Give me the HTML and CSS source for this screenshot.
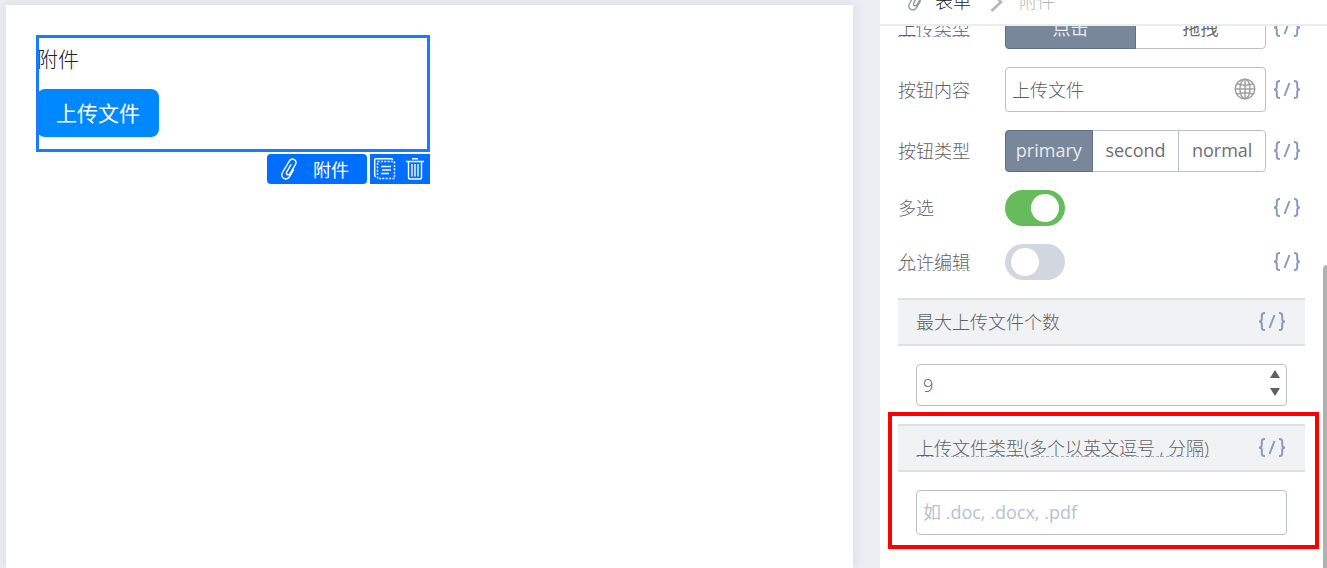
FILE: index.html
```html
<!DOCTYPE html>
<html lang="zh-CN">
<head>
    <meta charset="UTF-8">
    <meta name="viewport" content="width=device-width, initial-scale=1.0">
    <title>表单设计器</title>
    <link rel="stylesheet" href="styles.css">
</head>
<body>
    <!-- shared icons -->
    <svg class="sprite" aria-hidden="true">
        <symbol id="icon-clip" viewBox="0 0 18 22">
            <path d="M10.800 6.800 L6.800 13.800 C5.500 16.300 8.600 18 10 15.600 L15.400 6.600 C18 2 12 -1 9.300 3.200 L2.500 14.500 C-0.500 20 6.500 23.500 9.700 18.300 L13.500 12" fill="none" stroke="currentColor" stroke-width="1.400" stroke-linecap="round"/>
        </symbol>
        <symbol id="icon-code" viewBox="0 0 28 22">
            <path d="M7 2 H6.500 Q3.800 2 3.800 4.500 V8 Q3.800 10.500 1 10.500 Q3.800 10.500 3.800 13 V16.500 Q3.800 19 6.500 19 H7 M21 2 H21.500 Q24.200 2 24.200 4.500 V8 Q24.200 10.500 27 10.500 Q24.200 10.500 24.200 13 V16.500 Q24.200 19 21.500 19 H21 M16.500 4 L11.500 17" fill="none" stroke="currentColor" stroke-width="2"/>
        </symbol>
    </svg>

    <main class="workspace">
        <div class="canvas">
            <div class="widget">
                <div class="widget-title">附件</div>
                <button type="button" class="upload-btn">上传文件</button>
                <div class="widget-bar">
                    <div class="widget-tag">
                        <svg class="icon-clip"><use href="#icon-clip"/></svg>
                        <span>附件</span>
                    </div>
                    <div class="widget-tools">
                        <button type="button" aria-label="复制">
                            <svg width="22" height="22" viewBox="0 0 22 22" fill="none" stroke="currentColor">
                                <path d="M2 18.500 H1.500 Q0.700 18.500 0.700 17.500 V1.500 Q0.700 0.700 1.500 0.700 H17.500 Q18.500 0.700 18.500 1.500 V2" stroke-width="1.400"/>
                                <rect x="3.500" y="3.500" width="17" height="17" stroke-width="1.400" stroke-dasharray="2 1.400"/>
                                <path d="M7 8.500 H17 M8 12 H17 M7 15.500 H15" stroke-width="1.400"/>
                            </svg>
                        </button>
                        <button type="button" aria-label="删除">
                            <svg width="20" height="22" viewBox="0 0 20 22" fill="none" stroke="currentColor">
                                <path d="M1 3.500 H19 M7 0.700 H13" stroke-width="1.400"/>
                                <path d="M3.500 4 V19.500 Q3.500 21 5 21 H15 Q16.500 21 16.500 19.500 V4" stroke-width="1.400"/>
                                <path d="M7 6 V18.500 M10 6 V18.500 M13 6 V18.500" stroke-width="1.400"/>
                            </svg>
                        </button>
                    </div>
                </div>
            </div>
        </div>
    </main>

    <aside class="panel">
        <header class="panel-header">
            <svg class="icon-clip"><use href="#icon-clip"/></svg>
            <span class="crumb">表单</span>
            <svg class="chevron" width="13" height="20" viewBox="0 0 13 20"><path d="M1.500 1 L11 10 L1.500 19" fill="none" stroke="currentColor" stroke-width="2.500"/></svg>
            <span class="crumb current">附件</span>
        </header>

        <form class="settings">
            <div class="row">
                <span class="label tip">上传类型</span>
                <div class="segment">
                    <button type="button" class="active">点击</button>
                    <button type="button">拖拽</button>
                </div>
                <button type="button" class="code-btn" aria-label="代码"><svg><use href="#icon-code"/></svg></button>
            </div>

            <div class="row">
                <label class="label" for="btn-text">按钮内容</label>
                <div class="field">
                    <input type="text" id="btn-text" value="上传文件">
                    <svg class="globe" width="22" height="22" viewBox="0 0 22 22" fill="none" stroke="currentColor" stroke-width="1.500">
                        <circle cx="11" cy="11" r="9.800"/>
                        <ellipse cx="11" cy="11" rx="5" ry="9.800"/>
                        <path d="M11 1 V21 M1 11 H21 M3 5.800 Q11 8.500 19 5.800 M3 16.200 Q11 13.500 19 16.200"/>
                    </svg>
                </div>
                <button type="button" class="code-btn" aria-label="代码"><svg><use href="#icon-code"/></svg></button>
            </div>

            <div class="row">
                <span class="label">按钮类型</span>
                <div class="segment">
                    <button type="button" class="active">primary</button>
                    <button type="button">second</button>
                    <button type="button">normal</button>
                </div>
                <button type="button" class="code-btn" aria-label="代码"><svg><use href="#icon-code"/></svg></button>
            </div>

            <div class="row">
                <label class="label" for="multiple">多选</label>
                <input type="checkbox" class="switch" id="multiple" checked>
                <button type="button" class="code-btn" aria-label="代码"><svg><use href="#icon-code"/></svg></button>
            </div>

            <div class="row">
                <label class="label tip" for="editable">允许编辑</label>
                <input type="checkbox" class="switch" id="editable">
                <button type="button" class="code-btn" aria-label="代码"><svg><use href="#icon-code"/></svg></button>
            </div>

            <section class="group">
                <div class="group-title">
                    <label class="label" for="max-count">最大上传文件个数</label>
                    <button type="button" class="code-btn" aria-label="代码"><svg><use href="#icon-code"/></svg></button>
                </div>
                <div class="field number">
                    <input type="number" id="max-count" value="9">
                    <div class="stepper">
                        <button type="button" class="up" aria-label="增加"></button>
                        <button type="button" class="down" aria-label="减少"></button>
                    </div>
                </div>
            </section>

            <section class="group highlight">
                <div class="group-title">
                    <label class="label tip" for="file-types">上传文件类型(多个以英文逗号 , 分隔)</label>
                    <button type="button" class="code-btn" aria-label="代码"><svg><use href="#icon-code"/></svg></button>
                </div>
                <div class="field">
                    <input type="text" id="file-types" placeholder="如 .doc, .docx, .pdf">
                </div>
            </section>
        </form>
        <div class="scroll-thumb"></div>
    </aside>

    <script>
        const count = document.getElementById('max-count');
        document.querySelector('.up').addEventListener('click', () => count.stepUp());
        document.querySelector('.down').addEventListener('click', () => count.stepDown());
    </script>
</body>
</html>
```

FILE: styles.css
```css
* {
    box-sizing: border-box;
}

body {
    margin: 0;
    height: 100vh;
    display: flex;
    overflow: hidden;
    background-color: #ecedf2;
    color: #606266;
    font-family: "Open Sans", "Noto Sans CJK SC", sans-serif;
    font-size: 18px;
    font-weight: 300;
}

button,
input {
    font: inherit;
    color: inherit;
    margin: 0;
    padding: 0;
}

button {
    border: none;
    background: none;
    cursor: pointer;
}

.sprite {
    position: absolute;
    width: 0;
    height: 0;
}

.icon-clip {
    width: 18px;
    height: 22px;
}

/* canvas */
.workspace {
    flex: 1;
    display: flex;
    padding: 5px 27px 0 6px;
}

.canvas {
    flex: 1;
    padding: 30px;
    background-color: white;
    box-shadow: 0 0 10px rgba(90, 105, 125, 0.15);
}

.widget {
    position: relative;
    max-width: 394px;
    padding: 0 1px 15px;
}

.widget::after {
    content: "";
    position: absolute;
    inset: 0;
    border: 3px solid #1a7aff;
    pointer-events: none;
}

.widget-title {
    margin-bottom: 6px;
    line-height: 48px;
    font-size: 21px;
    color: #222;
}

.upload-btn {
    display: block;
    height: 48px;
    padding: 0 19px 3px;
    border-radius: 8px;
    background-color: #0088ff;
    color: white;
    font-size: 21px;
    font-weight: 400;
}

.widget-bar {
    position: absolute;
    top: 100%;
    right: 0;
    display: flex;
    gap: 3px;
    margin-top: 2px;
    color: white;
}

.widget-tag {
    display: flex;
    align-items: center;
    gap: 15px;
    height: 30px;
    padding: 0 18px 0 13px;
    border-radius: 4px;
    background-color: #006eff;
    font-weight: 400;
}

.widget-tools {
    display: flex;
    background-color: #006eff;
}

.widget-tools button {
    display: flex;
    align-items: center;
    justify-content: center;
    width: 30px;
}

/* settings panel */
.panel {
    position: relative;
    width: 447px;
    overflow: hidden;
    background-color: white;
}

.panel-header {
    position: relative;
    z-index: 1;
    display: flex;
    align-items: center;
    height: 50px;
    margin-top: -24px;
    padding: 0 27px;
    border-bottom: 2px solid #ebecee;
    background-color: white;
    color: #909aac;
}

.crumb {
    margin-left: 10px;
    color: #222;
}

.chevron {
    margin: 4px 6px 0 19px;
    color: #b5b5b5;
}

.crumb.current {
    color: #b5b5b5;
}

.settings {
    display: flex;
    flex-direction: column;
    gap: 18px;
    margin-top: -19px;
    padding: 0 22px 32px 18px;
}

.row {
    display: grid;
    grid-template-columns: 107px 1fr 39px;
    align-items: center;
}

.label {
    line-height: 24px;
}

.tip {
    text-decoration: underline dashed 1px #a5b0c8;
    text-underline-offset: 1px;
    text-decoration-skip-ink: none;
}

.code-btn {
    display: flex;
    align-items: center;
    padding-left: 7px;
    color: #8c9abc;
}

.code-btn svg {
    width: 28px;
    height: 22px;
}

.segment {
    display: flex;
    height: 42px;
    border: 1px solid #b8c2ce;
    border-radius: 4px;
}

.segment button {
    flex: 1;
    padding-bottom: 2px;
    border-left: 1px solid #b8c2ce;
    color: #6c6e72;
    font-weight: 400;
}

.segment .active {
    margin: -1px 0 -1px -1px;
    border: 1px solid #5f7088;
    border-radius: 4px 0 0 4px;
    background-color: #78879a;
    color: #e8ebef;
}

.segment .active + button {
    border-left: none;
}

.field {
    position: relative;
}

.field input {
    display: block;
    width: 100%;
    height: 45px;
    padding: 0 6px 2px;
    border: 1px solid #b8c2ce;
    border-radius: 4px;
    background-color: white;
}

.field input::placeholder {
    color: #b8c2ce;
    font-weight: 400;
}

.globe {
    position: absolute;
    top: 11px;
    right: 10px;
    color: #a0a0a0;
}

.switch {
    appearance: none;
    width: 60px;
    height: 36px;
    padding: 4px 6px;
    border-radius: 18px;
    background-color: #d2d6de;
    cursor: pointer;
}

.switch::before {
    content: "";
    display: block;
    width: 28px;
    height: 28px;
    border-radius: 50%;
    background-color: white;
}

.switch:checked {
    background-color: #66bb5c;
}

.switch:checked::before {
    margin-left: auto;
}

.group {
    position: relative;
}

.group-title {
    display: flex;
    align-items: center;
    justify-content: space-between;
    height: 48px;
    padding: 0 19px 0 18px;
    border: solid #dde1e6;
    border-width: 2px 0;
    background-color: #f1f2f4;
}

.group .field {
    margin: 18px 18px 0;
}

.number input {
    height: 42px;
    padding-bottom: 0;
    appearance: textfield;
}

.number input::-webkit-inner-spin-button {
    display: none;
}

.stepper {
    position: absolute;
    top: 6px;
    right: 7px;
    display: flex;
    flex-direction: column;
    gap: 10px;
}

.stepper button {
    width: 10px;
    height: 8px;
    background-color: #606060;
    clip-path: polygon(50% 0, 100% 100%, 0 100%);
}

.stepper .down {
    clip-path: polygon(0 0, 100% 0, 50% 100%);
}

.highlight::after {
    content: "";
    position: absolute;
    inset: -12px -14px -14px -10px;
    border: 4px solid #ff0000;
    pointer-events: none;
}

.scroll-thumb {
    position: absolute;
    top: 265px;
    right: 0;
    bottom: 0;
    width: 4px;
    border-radius: 4px 0 0 0;
    background-color: #b0b0b0;
}
```
